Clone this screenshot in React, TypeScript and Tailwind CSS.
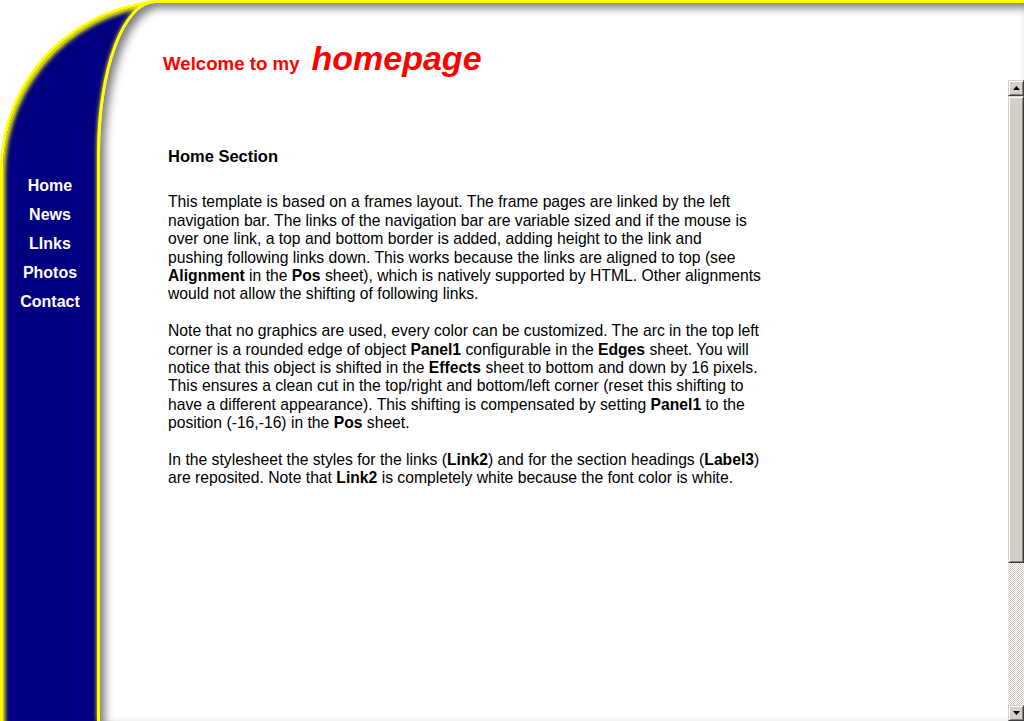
import React from "react";

const B = ({ children }: { children: React.ReactNode }) => (
  <b className="font-bold">{children}</b>
);

const Line = ({ children }: { children: React.ReactNode }) => (
  <div className="whitespace-nowrap">{children}</div>
);

function ScrollArrow({ dir }: { dir: "up" | "down" }) {
  return (
    <div className="h-[16px] w-[16px] bg-[#d4d0c8] border-t border-l border-t-[#d4d0c8] border-l-[#d4d0c8] shadow-[inset_1px_1px_0_#ffffff,inset_-1px_-1px_0_#808080] border-r border-b border-r-[#404040] border-b-[#404040] flex items-center justify-center">
      <svg width="7" height="4" viewBox="0 0 7 4">
        {dir === "up" ? (
          <polygon points="3.5,0 7,4 0,4" fill="#000" />
        ) : (
          <polygon points="0,0 7,0 3.5,4" fill="#000" />
        )}
      </svg>
    </div>
  );
}

export default function App() {
  const links = ["Home", "News", "LInks", "Photos", "Contact"];
  return (
    <div className="w-[1024px] h-[721px] overflow-hidden bg-white font-['Liberation_Sans',Arial,sans-serif]">
      <div className="w-[1024px] h-[721px] bg-[#000080] border-l-[3px] border-t-[3px] border-[#ffff00] rounded-tl-[170px] shadow-[inset_3px_3px_4px_-1px_#ffff00] flex">
        {/* left navigation */}
        <nav className="w-[94px] shrink-0 pt-[168px] flex flex-col items-center">
          {links.map((l) => (
            <div
              key={l}
              className="h-[29px] leading-[29px] text-[16px] font-bold text-white"
            >
              {l}
            </div>
          ))}
        </nav>

        {/* white content panel */}
        <div className="flex-1 -mt-[3px] bg-white border-l-[3px] border-t-[3px] border-[#ffff00] rounded-tl-[58px_153px] shadow-[0_0_4px_#ffff00,inset_5px_5px_8px_rgba(0,0,0,0.5)] flex flex-col">
          <header className="h-[77px] shrink-0 pl-[63px] pt-[38px] flex items-baseline text-[#ff0000] font-bold">
            <span className="text-[18.67px] leading-none">Welcome to my</span>
            <span className="ml-[12px] text-[34px] leading-none italic">
              homepage
            </span>
          </header>

          <div className="flex-1 flex">
            <main className="flex-1 pl-[68px] pt-[67px] text-black text-[15.7px] leading-[18.4px]">
              <h2 className="font-bold text-[16.5px] leading-[18.4px] mb-[28px]">
                Home Section
              </h2>
              <div>
                <Line>This template is based on a frames layout. The frame pages are linked by the left</Line>
                <Line>navigation bar. The links of the navigation bar are variable sized and if the mouse is</Line>
                <Line>over one link, a top and bottom border is added, adding height to the link and</Line>
                <Line>pushing following links down. This works because the links are aligned to top (see</Line>
                <Line>
                  <B>Alignment</B> in the <B>Pos</B> sheet), which is natively supported by HTML. Other alignments
                </Line>
                <Line>would not allow the shifting of following links.</Line>
              </div>
              <div className="mt-[18.4px]">
                <Line>Note that no graphics are used, every color can be customized. The arc in the top left</Line>
                <Line>
                  corner is a rounded edge of object <B>Panel1</B> configurable in the <B>Edges</B> sheet. You will
                </Line>
                <Line>
                  notice that this object is shifted in the <B>Effects</B> sheet to bottom and down by 16 pixels.
                </Line>
                <Line>This ensures a clean cut in the top/right and bottom/left corner (reset this shifting to</Line>
                <Line>
                  have a different appearance). This shifting is compensated by setting <B>Panel1</B> to the
                </Line>
                <Line>
                  position (-16,-16) in the <B>Pos</B> sheet.
                </Line>
              </div>
              <div className="mt-[18.4px]">
                <Line>
                  In the stylesheet the styles for the links (<B>Link2</B>) and for the section headings (<B>Label3</B>)
                </Line>
                <Line>
                  are reposited. Note that <B>Link2</B> is completely white because the font color is white.
                </Line>
              </div>
            </main>

            {/* classic scrollbar */}
            <div className="w-[16px] shrink-0 flex flex-col">
              <ScrollArrow dir="up" />
              <div className="h-[467px] shrink-0 bg-[#d4d0c8] border-t border-l border-[#d4d0c8] border-r border-b border-r-[#404040] border-b-[#404040] shadow-[inset_1px_1px_0_#ffffff,inset_-1px_-1px_0_#808080]" />
              <div className="flex-1 bg-[repeating-conic-gradient(#d4d0c8_0_25%,#ffffff_0_50%)] bg-[length:2px_2px]" />
              <ScrollArrow dir="down" />
            </div>
          </div>
        </div>
      </div>
    </div>
  );
}
